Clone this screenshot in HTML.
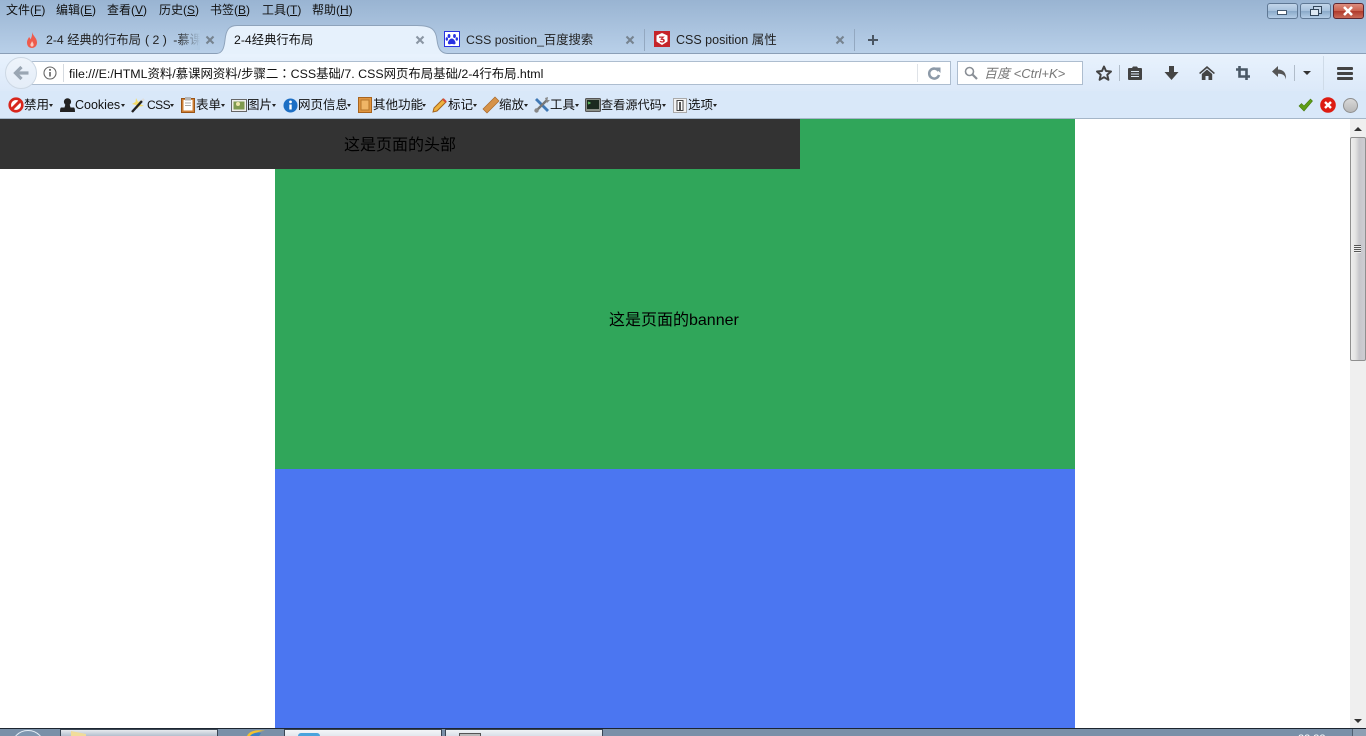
<!DOCTYPE html>
<html lang="zh-CN">
<head>
<meta charset="utf-8">
<title>2-4经典行布局</title>
<style>
html,body{margin:0;padding:0;width:1366px;height:736px;overflow:hidden;background:#fff}
body{position:relative;font-family:"Liberation Sans","Noto Sans CJK SC",sans-serif;font-size:12px;color:#111}
.a{position:absolute}
.t{position:absolute;white-space:nowrap;line-height:16px}
svg{position:absolute;overflow:visible}
.bm{top:97px;font-size:12.500px}
.car{position:absolute;top:104px;width:0;height:0;border-left:2px solid transparent;border-right:2px solid transparent;border-top:3px solid #222}
.wb{position:absolute;top:3px;width:29px;height:14px;border:1px solid #5f7894;border-radius:3px;background:linear-gradient(#c2d5ea 0,#a6c0dc 50%,#8aa9c9 51%,#b4cde6 100%)}
</style>
</head>
<body>
<!-- chrome bg -->
<div class="a" style="left:0;top:0;width:1366px;height:54px;background:linear-gradient(#99b4d2,#b9d0e9)"></div>
<div class="a" style="left:0;top:53px;width:1366px;height:1px;background:#8b9fb7"></div>
<div class="a" style="left:0;top:54px;width:1366px;height:37px;background:linear-gradient(#e8f2fd,#dce9f9)"></div>
<div class="a" style="left:0;top:91px;width:1366px;height:27px;background:#d9e8f9"></div>
<div class="a" style="left:0;top:118px;width:1366px;height:1px;background:#a5b6c8"></div>

<!-- menu -->
<div class="t" style="left:6px;top:2px">文件(<u>F</u>)</div>
<div class="t" style="left:56px;top:2px">编辑(<u>E</u>)</div>
<div class="t" style="left:107px;top:2px">查看(<u>V</u>)</div>
<div class="t" style="left:159px;top:2px">历史(<u>S</u>)</div>
<div class="t" style="left:210px;top:2px">书签(<u>B</u>)</div>
<div class="t" style="left:262px;top:2px">工具(<u>T</u>)</div>
<div class="t" style="left:312px;top:2px">帮助(<u>H</u>)</div>

<!-- window buttons -->
<div class="wb" style="left:1267px"></div>
<div class="a" style="left:1277px;top:10px;width:10px;height:5px;background:#fff;border:1px solid #44586e;box-sizing:border-box"></div>
<div class="wb" style="left:1300px"></div>
<div class="a" style="left:1313px;top:6px;width:7px;height:6px;border:1px solid #33465a;background:#c5d7ea"></div>
<div class="a" style="left:1310px;top:9px;width:7px;height:5px;border:1px solid #33465a;background:#dde8f3"></div>
<div class="wb" style="left:1333px;border-color:#5e2630;background:linear-gradient(#dc8d7e 0,#c9604e 50%,#b03a2c 51%,#c96a58 100%)"></div>
<svg style="left:1342px;top:6px" width="12" height="10"><path d="M2 1 L10 9 M10 1 L2 9" stroke="#fff" stroke-width="2.600"/></svg>

<!-- tabs -->
<svg style="left:217px;top:25px" width="232" height="30"><path d="M0 28.500 C5 28 7 24 8 15 C9 5 12 .5 20 .5 L200 .5 C215 .5 219 5 220 15 C221 24 224 28 230 28.500 L230 30 L0 30 Z" fill="#e6f1fc" stroke="#8ea3bb"/><path d="M-1 29 H231 V32 H-1Z" fill="#e8f2fd"/></svg>
<svg style="left:26px;top:32px" width="12" height="16"><path d="M6 0 C7 4 11 6 11 10.500 C11 14 8.500 16 6 16 C3 16 1 14 1 10.500 C1 8 2.500 6.500 3 5 C4 6 4.500 7 4.500 7.500 C5.500 5.500 6.500 3 6 0Z" fill="#ef5b4c"/><path d="M6 9 C7 11 8 12 7.500 13.500 C7 15 5 15 4.500 13.500 C4 12 5.500 11 6 9Z" fill="#f9c9bf"/></svg>
<div class="t" style="left:46px;top:32px;width:154px;overflow:hidden;font-size:12.300px;color:#222">2-4 经典的行布局<span style="margin:0 3px 0 4px">(&nbsp;2&nbsp;)</span>&nbsp;-慕课</div>
<div class="a" style="left:178px;top:30px;width:22px;height:20px;background:linear-gradient(90deg,rgba(175,200,226,0),#aec8e2)"></div>
<svg style="left:206px;top:36px" width="8" height="8"><path d="M.5 .5 L7.500 7.500 M7.500 .5 L.5 7.500" stroke="#76838f" stroke-width="2.100"/></svg>
<div class="t" style="left:234px;top:32px;font-size:12.300px;color:#111">2-4经典行布局</div>
<svg style="left:416px;top:36px" width="8" height="8"><path d="M.5 .5 L7.500 7.500 M7.500 .5 L.5 7.500" stroke="#8a96a3" stroke-width="2.100"/></svg>
<svg style="left:444px;top:31px" width="16" height="17"><rect x=".5" y=".5" width="15" height="15" fill="#fff" stroke="#2932e1"/><g fill="#2932e1"><ellipse cx="5" cy="5" rx="1.400" ry="2"/><ellipse cx="10.500" cy="5" rx="1.400" ry="2"/><ellipse cx="2.800" cy="8" rx="1.200" ry="1.700"/><ellipse cx="12.800" cy="8" rx="1.200" ry="1.700"/><path d="M7.800 7.500 C10 7.500 12 11 11.500 12.500 C11 14 9 13 7.800 13 C6.500 13 4.500 14 4 12.500 C3.500 11 5.500 7.500 7.800 7.500Z"/></g></svg>
<div class="t" style="left:466px;top:32px;font-size:12.300px;color:#222">CSS position_百度搜索</div>
<svg style="left:626px;top:36px" width="8" height="8"><path d="M.5 .5 L7.500 7.500 M7.500 .5 L.5 7.500" stroke="#76838f" stroke-width="2.100"/></svg>
<div class="a" style="left:644px;top:29px;width:1px;height:22px;background:#93a8c0"></div>
<svg style="left:654px;top:31px" width="16" height="16"><rect width="16" height="16" fill="#c5242a"/><path d="M8 2 L13.500 4.500 V10.500 L8 14 L2.500 10.500 V4.500Z" fill="#fff"/><path d="M5 5.500 H10.800 L8.200 7.800 C10 7.600 11 8.700 10.800 10 C10.500 11.700 7.500 12.300 5.500 10.800 L6.500 9.800 C7.500 10.500 9 10.500 9.200 9.700 C9.300 9 8 8.700 6.800 9 L6.500 8 L8 6.800 H5Z" fill="#c5242a"/></svg>
<div class="t" style="left:676px;top:32px;font-size:12.500px;color:#222">CSS position 属性</div>
<svg style="left:836px;top:36px" width="8" height="8"><path d="M.5 .5 L7.500 7.500 M7.500 .5 L.5 7.500" stroke="#76838f" stroke-width="2.100"/></svg>
<div class="a" style="left:854px;top:29px;width:1px;height:22px;background:#93a8c0"></div>
<svg style="left:868px;top:35px" width="10" height="10"><path d="M5 0 V10 M0 5 H10" stroke="#4a5663" stroke-width="2"/></svg>

<!-- url bar -->
<div class="a" style="left:20px;top:61px;width:930px;height:22px;background:#fff;border:1px solid #adbdcf;border-left:0"></div>
<div class="a" style="left:5px;top:57px;width:30px;height:30px;border-radius:50%;background:linear-gradient(#eef4fb,#e4edf8);border:1px solid #cdd8e4"></div>
<svg style="left:14px;top:66px" width="15" height="14"><path d="M7.500 1 L1.500 7 L7.500 13 M2 7 H14.500" fill="none" stroke="#9aa6b3" stroke-width="3.200"/></svg>
<svg style="left:43px;top:66px" width="14" height="14"><circle cx="7" cy="7" r="6" fill="#fff" stroke="#666" stroke-width="1.100"/><path d="M7 6 V10.500" stroke="#555" stroke-width="1.500"/><circle cx="7" cy="3.900" r="1" fill="#555"/></svg>
<div class="a" style="left:63px;top:64px;width:1px;height:18px;background:#d5dae0"></div>
<div class="t" style="left:69px;top:65px;font-size:12.400px;color:#111">file:///E:/HTML资料/慕课网资料/步骤二<span lang="zh-TW" style="font-family:'Noto Sans CJK TC',sans-serif">：</span>CSS基础/7. CSS网页布局基础/2-4行布局.html</div>
<div class="a" style="left:917px;top:64px;width:1px;height:18px;background:#dfe3e8"></div>
<svg style="left:928px;top:67px" width="13" height="13"><path d="M10.500 4 A5 5 0 1 0 11 8" fill="none" stroke="#8d9aa8" stroke-width="2.500"/><path d="M7 .5 H12.500 V6 Z" fill="#8d9aa8"/></svg>
<!-- search -->
<div class="a" style="left:957px;top:61px;width:124px;height:22px;background:#fff;border:1px solid #adbdcf"></div>
<svg style="left:964px;top:66px" width="14" height="14"><circle cx="5.500" cy="5.500" r="4" fill="none" stroke="#8a8f96" stroke-width="1.600"/><path d="M8.500 8.500 L13 13" stroke="#8a8f96" stroke-width="2.200"/></svg>
<div class="t" style="left:984px;top:66px;font-size:13px;font-style:italic;color:#777">百度 &lt;Ctrl+K&gt;</div>

<!-- toolbar icons -->
<svg style="left:1096px;top:65px" width="16" height="16"><path d="M8 1.500 L10 6 L15 6.500 L11.300 9.800 L12.400 14.800 L8 12.200 L3.600 14.800 L4.700 9.800 L1 6.500 L6 6Z" fill="none" stroke="#444" stroke-width="2" stroke-linejoin="round"/></svg>
<div class="a" style="left:1119px;top:65px;width:1px;height:16px;background:#b0bcc9"></div>
<svg style="left:1128px;top:65px" width="14" height="15"><path d="M0 4 Q0 3 1 3 H4 L5 1.500 H9 L10 3 H13 Q14 3 14 4 V14 Q14 15 13 15 H1 Q0 15 0 14Z" fill="#444"/><path d="M3 6.500 H11 M3 9 H11 M3 11.500 H11" stroke="#dde9f7" stroke-width="1"/></svg>
<svg style="left:1164px;top:66px" width="15" height="14"><path d="M5 0 H10 V6 H14.500 L7.500 14 L.5 6 H5Z" fill="#444"/></svg>
<svg style="left:1199px;top:66px" width="16" height="14"><path d="M8 0 L16 7 L14.800 8 L8 2.200 L1.200 8 L0 7Z" fill="#444"/><path d="M2.800 8 L8 3.500 L13.200 8 V14 H9.500 V10 H6.500 V14 H2.800Z" fill="#444"/></svg>
<svg style="left:1236px;top:66px" width="14" height="14"><path d="M3.500 0 V10.500 H14 M0 3.500 H10.500 V14" fill="none" stroke="#4a5866" stroke-width="2.600"/></svg>
<svg style="left:1272px;top:66px" width="15" height="14"><path d="M6 0 V3.500 C11 3.500 14.500 6.500 14 13.500 C13 9 10.500 7.800 6 7.800 V11 L0 5.500Z" fill="#555"/></svg>
<div class="a" style="left:1294px;top:65px;width:1px;height:16px;background:#b0bcc9"></div>
<div class="a" style="left:1303px;top:71px;width:0;height:0;border-left:4px solid transparent;border-right:4px solid transparent;border-top:4px solid #333"></div>
<div class="a" style="left:1323px;top:56px;width:1px;height:34px;background:#cfdbe8"></div>
<div class="a" style="left:1337px;top:67px;width:16px;height:3px;background:#444;border-radius:1px"></div>
<div class="a" style="left:1337px;top:72px;width:16px;height:3px;background:#444;border-radius:1px"></div>
<div class="a" style="left:1337px;top:77px;width:16px;height:3px;background:#444;border-radius:1px"></div>

<!-- bookmark bar -->
<svg style="left:8px;top:97px" width="16" height="16"><circle cx="8" cy="8" r="6.300" fill="#fff" stroke="#d8261c" stroke-width="2.600"/><path d="M3.500 12.500 L12.500 3.500" stroke="#d8261c" stroke-width="3"/></svg>
<div class="t bm" style="left:24px">禁用</div><div class="car" style="left:49px"></div>
<svg style="left:60px;top:98px" width="15" height="14"><circle cx="7.500" cy="3.800" r="3.600" fill="#222"/><path d="M5.500 6 H9.500 L10.500 9.500 H14 Q15 10 15 14 H0 Q0 10 1 9.500 H4.500Z" fill="#222"/></svg>
<div class="t bm" style="left:75px">Cookies</div><div class="car" style="left:121px"></div>
<svg style="left:131px;top:97px" width="15" height="16"><path d="M5 1 L7 5 L11 3 L9 7 L13 9 L8 9.500 L6 12 L5 8 L1 7 L4.500 5Z" fill="#f4dc6a"/><path d="M1 15 L11 4" stroke="#222" stroke-width="2.400"/><path d="M11 4 L13 2" stroke="#ddd" stroke-width="2.400"/></svg>
<div class="t bm" style="left:147px;font-size:12px;letter-spacing:-.5px">CSS</div><div class="car" style="left:170px"></div>
<svg style="left:181px;top:97px" width="14" height="16"><rect x=".5" y="1.500" width="13" height="14" fill="#cf8036" stroke="#995518"/><rect x="2.500" y="3" width="9" height="10.500" fill="#fff"/><rect x="4" y="0" width="6" height="3.500" fill="#b5b5b5"/><path d="M4 6 H10 M4 8.500 H10" stroke="#aaa"/></svg>
<div class="t bm" style="left:196px">表单</div><div class="car" style="left:221px"></div>
<svg style="left:231px;top:99px" width="16" height="13"><rect x=".5" y=".5" width="15" height="12" fill="#eee" stroke="#666"/><rect x="2.500" y="2.500" width="11" height="8" fill="#7f9a4f"/><circle cx="7" cy="5" r="2" fill="#ede6a8"/></svg>
<div class="t bm" style="left:247px">图片</div><div class="car" style="left:272px"></div>
<svg style="left:283px;top:98px" width="15" height="15"><circle cx="7.500" cy="7.500" r="7" fill="#1d6fc4"/><path d="M7.500 6.500 V11.500" stroke="#fff" stroke-width="2.400"/><circle cx="7.500" cy="3.900" r="1.400" fill="#fff"/></svg>
<div class="t bm" style="left:298px">网页信息</div><div class="car" style="left:347px"></div>
<svg style="left:358px;top:97px" width="14" height="16"><rect x=".5" y=".5" width="13" height="15" fill="#e0953f" stroke="#a8641e"/><rect x="3" y="3" width="8" height="10" fill="#efb566" stroke="#b5762c"/></svg>
<div class="t bm" style="left:373px">其他功能</div><div class="car" style="left:422px"></div>
<svg style="left:432px;top:97px" width="15" height="16"><path d="M1 15 L2 11 L11 2 L14 5 L5 14Z" fill="#eeb23f" stroke="#a5641b"/><path d="M11 2 L14 5" stroke="#d6483b" stroke-width="2"/></svg>
<div class="t bm" style="left:448px">标记</div><div class="car" style="left:473px"></div>
<svg style="left:483px;top:97px" width="15" height="16"><path d="M0 12 L12 0 L16 4 L4 16Z" fill="#d69248" stroke="#a8682a" stroke-width=".7"/></svg>
<div class="t bm" style="left:499px">缩放</div><div class="car" style="left:524px"></div>
<svg style="left:534px;top:97px" width="16" height="16"><path d="M2 2 L14 14" stroke="#3f78b5" stroke-width="2.800"/><path d="M13 3 L2 14" stroke="#777" stroke-width="2.400"/><circle cx="2.500" cy="13.500" r="2.200" fill="#888"/><path d="M11 1 L14 0 L13.500 3 L16 3 L13 6Z" fill="#888"/></svg>
<div class="t bm" style="left:550px">工具</div><div class="car" style="left:575px"></div>
<svg style="left:585px;top:98px" width="16" height="14"><rect x=".5" y=".5" width="15" height="13" rx="1" fill="#8b9088" stroke="#555"/><rect x="2" y="2" width="12" height="9" fill="#1c2a1f"/><path d="M3 4 L5 5 L3 6" stroke="#6c6" fill="none"/></svg>
<div class="t bm" style="left:601px;font-size:12.200px">查看源代码</div><div class="car" style="left:662px"></div>
<svg style="left:673px;top:98px" width="14" height="15"><rect x=".5" y=".5" width="13" height="14" fill="#f2f2f2" stroke="#aaa"/><rect x="4" y="2.500" width="6" height="10" fill="#fff" stroke="#444"/><rect x="6" y="4" width="2" height="8" fill="#555"/></svg>
<div class="t bm" style="left:688px">选项</div><div class="car" style="left:713px"></div>

<!-- right status icons -->
<svg style="left:1298px;top:98px" width="15" height="14"><path d="M1 8 L3.500 5.500 L6 8 L12.500 1 L14.500 3 L6 13Z" fill="#5f9e16" stroke="#477a0e" stroke-width=".6"/></svg>
<svg style="left:1320px;top:97px" width="16" height="16"><circle cx="8" cy="8" r="7.800" fill="#dd1c12"/><path d="M5 5 L11 11 M11 5 L5 11" stroke="#fff" stroke-width="2.400"/></svg>
<div class="a" style="left:1343px;top:98px;width:13px;height:13px;border-radius:50%;background:linear-gradient(#d8d8d8,#b8b8b8);border:1px solid #8f8f8f"></div>

<!-- page content -->
<div class="a" style="left:275px;top:119px;width:800px;height:350px;background:#30a65a"></div>
<div class="a" style="left:275px;top:469px;width:800px;height:259px;background:#4b76f1"></div>
<div class="a" style="left:0;top:119px;width:800px;height:50px;background:#333"></div>
<div class="t" style="left:344px;top:137px;font-size:16px;line-height:18px;color:#000">这是页面的头部</div>
<div class="t" style="left:609px;top:312px;font-size:16px;line-height:18px;color:#000">这是页面的banner</div>

<!-- scrollbar -->
<div class="a" style="left:1350px;top:119px;width:16px;height:609px;background:#efefef"></div>
<div class="a" style="left:1354px;top:127px;width:0;height:0;border-left:4px solid transparent;border-right:4px solid transparent;border-bottom:4px solid #333"></div>
<div class="a" style="left:1350px;top:137px;width:14px;height:222px;border:1px solid #8f8f8f;border-radius:2px;background:linear-gradient(90deg,#eee 0,#e4e4e4 30%,#c6c6cb 60%,#cdcdd2 100%)"></div>
<div class="a" style="left:1354px;top:245px;width:7px;height:8px;background:repeating-linear-gradient(#555 0,#555 1px,#eee 1px,#eee 2px)"></div>
<div class="a" style="left:1354px;top:719px;width:0;height:0;border-left:4px solid transparent;border-right:4px solid transparent;border-top:4px solid #333"></div>

<!-- taskbar -->
<div class="a" style="left:0;top:728px;width:1366px;height:1px;background:#1c2530"></div>
<div class="a" style="left:0;top:729px;width:1366px;height:7px;background:#7a90a8"></div>
<div class="a" style="left:11px;top:730px;width:32px;height:32px;border-radius:50%;border:1px solid #e5eef6;background:#7f97b0"></div>
<div class="a" style="left:60px;top:729px;width:156px;height:7px;background:linear-gradient(#e8ebef,#aab8c8);border:1px solid #3a4654;border-bottom:0"></div>
<svg style="left:70px;top:731px" width="22" height="5"><path d="M1 5 V0 L16 3 V5Z" fill="#f0dc9a"/></svg>
<svg style="left:244px;top:730px" width="22" height="6"><path d="M3 6 C5 1 13 -1 21 1 C17 1 11 2 9 6Z" fill="#f1c230"/><path d="M6 6 C8 3 13 2 17 3 L15 6Z" fill="#3a80c8"/></svg>
<div class="a" style="left:284px;top:729px;width:156px;height:7px;background:linear-gradient(#f4f6f8,#dfe5ec);border:1px solid #3a4654;border-bottom:0"></div>
<div class="a" style="left:298px;top:733px;width:22px;height:3px;border-radius:11px 11px 0 0;background:#4aa3dc"></div>
<div class="a" style="left:445px;top:729px;width:156px;height:7px;background:linear-gradient(#f0f3f6,#d4dce5);border:1px solid #3a4654;border-bottom:0"></div>
<div class="a" style="left:459px;top:733px;width:22px;height:3px;background:#bbb;border:1px solid #555;border-bottom:0;box-sizing:border-box"></div>
<div class="t" style="left:1298px;top:733px;font-size:11px;line-height:12px;color:#fff">22:32</div>
<div class="a" style="left:1352px;top:729px;width:14px;height:7px;background:#8d9fb3;border-left:1px solid #4f5f70"></div>
</body>
</html>
